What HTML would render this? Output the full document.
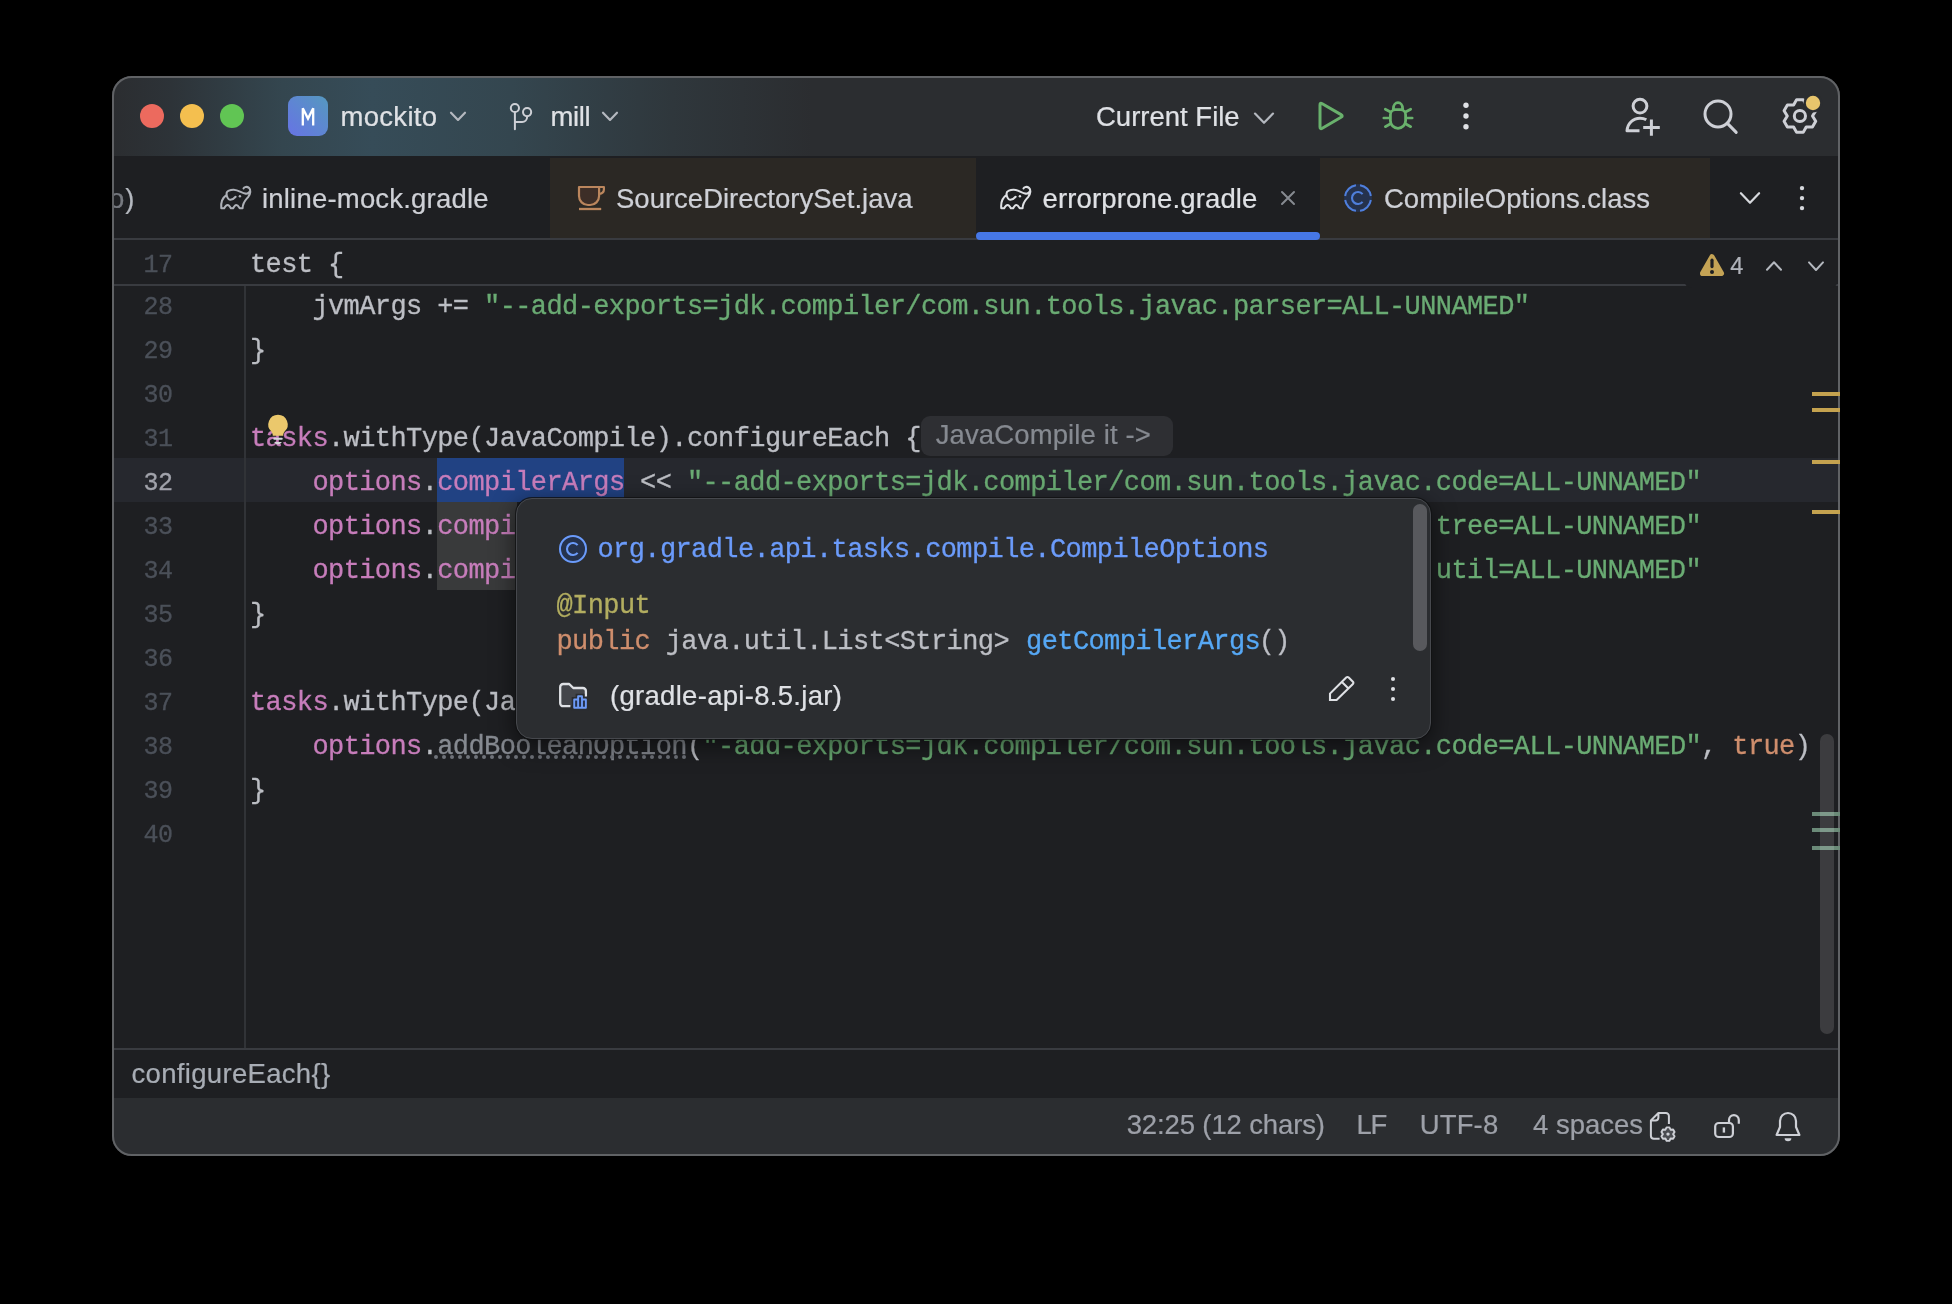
<!DOCTYPE html>
<html lang="en"><head><meta charset="utf-8"><title>errorprone.gradle - mockito</title>
<style>
html,body{margin:0;padding:0;background:#000;}
body{width:1952px;height:1304px;overflow:hidden;position:relative;}
.win{position:absolute;left:112px;top:76px;width:1728px;height:1080px;border-radius:20px;overflow:hidden;background:#1e1f22;}
.pg{position:absolute;left:-112px;top:-76px;width:1952px;height:1304px;will-change:transform;}
.frame{position:absolute;left:112px;top:76px;width:1728px;height:1080px;border-radius:20px;box-sizing:border-box;border:2px solid #606265;pointer-events:none;}
.b{position:absolute;display:block;}
.t{position:absolute;white-space:pre;margin:0;padding:0;}
.s{font-family:"Liberation Sans",sans-serif;-webkit-text-stroke:0.22px;}
.m{font-family:"Liberation Mono",monospace;-webkit-text-stroke:0.3px;}
.m span,.s span{white-space:pre;}
</style></head>
<body>
<div class="win"><div class="pg">
<div class="b" style="left:112px;top:76px;width:1728px;height:80px;background:linear-gradient(90deg,#2b2d30 0px,#2d3338 60px,#34464f 170px,#364c58 260px,#34464f 400px,#2f373c 560px,#2b2d30 700px);"></div>
<div class="b" style="left:112px;top:156px;width:1728px;height:84px;background:#1e1f22;"></div>
<div class="b" style="left:550px;top:158px;width:426px;height:80px;background:#2b2824;"></div>
<div class="b" style="left:1320px;top:158px;width:390px;height:80px;background:#2b2824;"></div>
<div class="b" style="left:112px;top:238px;width:1728px;height:2px;background:#393b40;"></div>
<div class="b" style="left:976px;top:232px;width:344px;height:8px;background:#4677e6;border-radius:4px;"></div>
<div class="b" style="left:112px;top:240px;width:1728px;height:808px;background:#1e1f22;"></div>
<div class="b" style="left:112px;top:458px;width:1726px;height:44px;background:#26282e;"></div>
<div class="b" style="left:244px;top:286px;width:2px;height:762px;background:#313337;"></div>
<div class="b" style="left:112px;top:1048px;width:1728px;height:2px;background:#393b40;"></div>
<div class="b" style="left:112px;top:1050px;width:1728px;height:48px;background:#1e1f22;"></div>
<div class="b" style="left:112px;top:1098px;width:1728px;height:58px;background:#2b2d30;"></div>
<div class="b" style="left:140px;top:104px;width:24px;height:24px;background:#ec6a5e;border-radius:50%;"></div>
<div class="b" style="left:180px;top:104px;width:24px;height:24px;background:#f4bf4f;border-radius:50%;"></div>
<div class="b" style="left:220px;top:104px;width:24px;height:24px;background:#61c554;border-radius:50%;"></div>
<div class="b" style="left:288px;top:96px;width:40px;height:40px;background:linear-gradient(45deg,#6675e3 5%,#5697c1 95%);border-radius:9px;"></div>
<div class="t s" style="left:340.5px;top:101.2px;font-size:27.5px;line-height:31px;color:#dfe1e5;letter-spacing:0.3px;">mockito</div>
<div class="t s" style="left:550.5px;top:101.2px;font-size:27.5px;line-height:31px;color:#dfe1e5;letter-spacing:-0.4px;">mill</div>
<div class="t s" style="left:1096px;top:101.2px;font-size:27.5px;line-height:31px;color:#dfe1e5;">Current File</div>
<div class="t s" style="left:109px;top:183px;font-size:27.5px;line-height:31px;color:#b4b8bf;"><span style="color:#777a80">o</span><span style="margin-left:1px">)</span></div>
<div class="t s" style="left:262px;top:183px;font-size:27.5px;line-height:31px;color:#ced0d6;letter-spacing:0.2px;">inline-mock.gradle</div>
<div class="t s" style="left:616px;top:183px;font-size:27.5px;line-height:31px;color:#ced0d6;">SourceDirectorySet.java</div>
<div class="t s" style="left:1042.5px;top:183px;font-size:27.5px;line-height:31px;color:#dfe1e5;letter-spacing:0.15px;">errorprone.gradle</div>
<div class="t s" style="left:1384px;top:183px;font-size:27.5px;line-height:31px;color:#ced0d6;">CompileOptions.class</div>
<div class="b" style="left:437px;top:458px;width:187px;height:44px;background:#214283;"></div>
<div class="b" style="left:437px;top:502px;width:80px;height:88px;background:#393a3b;"></div>
<div class="t m" style="left:143.6px;top:293px;font-size:25px;line-height:29px;color:#4b5059;letter-spacing:-0.6px;">28</div>
<div class="t m" style="left:143.6px;top:337px;font-size:25px;line-height:29px;color:#4b5059;letter-spacing:-0.6px;">29</div>
<div class="t m" style="left:143.6px;top:381px;font-size:25px;line-height:29px;color:#4b5059;letter-spacing:-0.6px;">30</div>
<div class="t m" style="left:143.6px;top:425px;font-size:25px;line-height:29px;color:#4b5059;letter-spacing:-0.6px;">31</div>
<div class="t m" style="left:143.6px;top:469px;font-size:25px;line-height:29px;color:#a1a3ab;letter-spacing:-0.6px;">32</div>
<div class="t m" style="left:143.6px;top:513px;font-size:25px;line-height:29px;color:#4b5059;letter-spacing:-0.6px;">33</div>
<div class="t m" style="left:143.6px;top:557px;font-size:25px;line-height:29px;color:#4b5059;letter-spacing:-0.6px;">34</div>
<div class="t m" style="left:143.6px;top:601px;font-size:25px;line-height:29px;color:#4b5059;letter-spacing:-0.6px;">35</div>
<div class="t m" style="left:143.6px;top:645px;font-size:25px;line-height:29px;color:#4b5059;letter-spacing:-0.6px;">36</div>
<div class="t m" style="left:143.6px;top:689px;font-size:25px;line-height:29px;color:#4b5059;letter-spacing:-0.6px;">37</div>
<div class="t m" style="left:143.6px;top:733px;font-size:25px;line-height:29px;color:#4b5059;letter-spacing:-0.6px;">38</div>
<div class="t m" style="left:143.6px;top:777px;font-size:25px;line-height:29px;color:#4b5059;letter-spacing:-0.6px;">39</div>
<div class="t m" style="left:143.6px;top:821px;font-size:25px;line-height:29px;color:#4b5059;letter-spacing:-0.6px;">40</div>
<div class="t m" style="left:250px;top:292px;font-size:27px;line-height:30px;color:#bcbec4;letter-spacing:-0.6px;"><span style="color:#bcbec4">    jvmArgs += </span><span style="color:#6aab73">"--add-exports=jdk.compiler/com.sun.tools.javac.parser=ALL-UNNAMED"</span></div>
<div class="t m" style="left:250px;top:336px;font-size:27px;line-height:30px;color:#bcbec4;letter-spacing:-0.6px;"><span style="color:#bcbec4">}</span></div>
<div class="t m" style="left:250px;top:424px;font-size:27px;line-height:30px;color:#bcbec4;letter-spacing:-0.6px;"><span style="color:#c77dbb">tasks</span><span style="color:#bcbec4">.withType(JavaCompile).configureEach {</span></div>
<div class="t m" style="left:250px;top:468px;font-size:27px;line-height:30px;color:#bcbec4;letter-spacing:-0.6px;"><span style="color:#bcbec4">    </span><span style="color:#c77dbb">options</span><span style="color:#bcbec4">.</span><span style="color:#c77dbb">compilerArgs</span><span style="color:#bcbec4"> &lt;&lt; </span><span style="color:#6aab73">"--add-exports=jdk.compiler/com.sun.tools.javac.code=ALL-UNNAMED"</span></div>
<div class="t m" style="left:250px;top:512px;font-size:27px;line-height:30px;color:#bcbec4;letter-spacing:-0.6px;"><span style="color:#bcbec4">    </span><span style="color:#c77dbb">options</span><span style="color:#bcbec4">.</span><span style="color:#c77dbb">compilerArgs</span><span style="color:#bcbec4"> &lt;&lt; </span><span style="color:#6aab73">"--add-exports=jdk.compiler/com.sun.tools.javac.tree=ALL-UNNAMED"</span></div>
<div class="t m" style="left:250px;top:556px;font-size:27px;line-height:30px;color:#bcbec4;letter-spacing:-0.6px;"><span style="color:#bcbec4">    </span><span style="color:#c77dbb">options</span><span style="color:#bcbec4">.</span><span style="color:#c77dbb">compilerArgs</span><span style="color:#bcbec4"> &lt;&lt; </span><span style="color:#6aab73">"--add-exports=jdk.compiler/com.sun.tools.javac.util=ALL-UNNAMED"</span></div>
<div class="t m" style="left:250px;top:600px;font-size:27px;line-height:30px;color:#bcbec4;letter-spacing:-0.6px;"><span style="color:#bcbec4">}</span></div>
<div class="t m" style="left:250px;top:688px;font-size:27px;line-height:30px;color:#bcbec4;letter-spacing:-0.6px;"><span style="color:#c77dbb">tasks</span><span style="color:#bcbec4">.withType(JavaCompile).configureEach {</span></div>
<div class="t m" style="left:250px;top:732px;font-size:27px;line-height:30px;color:#bcbec4;letter-spacing:-0.6px;"><span style="color:#bcbec4">    </span><span style="color:#c77dbb">options</span><span style="color:#bcbec4">.</span><span style="color:#868a91">addBooleanOption</span><span style="color:#bcbec4">(</span><span style="color:#6aab73">"-add-exports=jdk.compiler/com.sun.tools.javac.code=ALL-UNNAMED"</span><span style="color:#bcbec4">, </span><span style="color:#cf8e6d">true</span><span style="color:#bcbec4">)</span></div>
<div class="t m" style="left:250px;top:776px;font-size:27px;line-height:30px;color:#bcbec4;letter-spacing:-0.6px;"><span style="color:#bcbec4">}</span></div>
<svg class="b" style="left:430px;top:752px" width="264" height="10" viewBox="430 752 264 10"><circle cx="436" cy="757" r="2" fill="#6f737a"/><circle cx="444" cy="757" r="2" fill="#6f737a"/><circle cx="452" cy="757" r="2" fill="#6f737a"/><circle cx="460" cy="757" r="2" fill="#6f737a"/><circle cx="468" cy="757" r="2" fill="#6f737a"/><circle cx="476" cy="757" r="2" fill="#6f737a"/><circle cx="484" cy="757" r="2" fill="#6f737a"/><circle cx="492" cy="757" r="2" fill="#6f737a"/><circle cx="500" cy="757" r="2" fill="#6f737a"/><circle cx="508" cy="757" r="2" fill="#6f737a"/><circle cx="516" cy="757" r="2" fill="#6f737a"/><circle cx="524" cy="757" r="2" fill="#6f737a"/><circle cx="532" cy="757" r="2" fill="#6f737a"/><circle cx="540" cy="757" r="2" fill="#6f737a"/><circle cx="548" cy="757" r="2" fill="#6f737a"/><circle cx="556" cy="757" r="2" fill="#6f737a"/><circle cx="564" cy="757" r="2" fill="#6f737a"/><circle cx="572" cy="757" r="2" fill="#6f737a"/><circle cx="580" cy="757" r="2" fill="#6f737a"/><circle cx="588" cy="757" r="2" fill="#6f737a"/><circle cx="596" cy="757" r="2" fill="#6f737a"/><circle cx="604" cy="757" r="2" fill="#6f737a"/><circle cx="612" cy="757" r="2" fill="#6f737a"/><circle cx="620" cy="757" r="2" fill="#6f737a"/><circle cx="628" cy="757" r="2" fill="#6f737a"/><circle cx="636" cy="757" r="2" fill="#6f737a"/><circle cx="644" cy="757" r="2" fill="#6f737a"/><circle cx="652" cy="757" r="2" fill="#6f737a"/><circle cx="660" cy="757" r="2" fill="#6f737a"/><circle cx="668" cy="757" r="2" fill="#6f737a"/><circle cx="676" cy="757" r="2" fill="#6f737a"/><circle cx="684" cy="757" r="2" fill="#6f737a"/></svg>
<div class="b" style="left:921px;top:416px;width:252px;height:40px;background:#2e2f33;border-radius:9px;"></div>
<div class="t s" style="left:935.7px;top:419px;font-size:27.5px;line-height:31px;color:#868a91;letter-spacing:0.12px;">JavaCompile it -&gt;</div>
<div class="b" style="left:112px;top:240px;width:1728px;height:44px;background:#1e1f22;"></div>
<div class="b" style="left:112px;top:284px;width:1728px;height:2px;background:#393b40;"></div>
<div class="t m" style="left:143.6px;top:251px;font-size:25px;line-height:29px;color:#4b5059;letter-spacing:-0.6px;">17</div>
<div class="t m" style="left:250px;top:250px;font-size:27px;line-height:30px;color:#bcbec4;letter-spacing:-0.6px;"><span style="color:#bcbec4">test {</span></div>
<div class="b" style="left:1684px;top:240px;width:154px;height:48px;background:#1e1f22;border-radius:0 0 8px 8px;"></div>
<div class="t s" style="left:1730.2px;top:253px;font-size:23.6px;line-height:26px;color:#b0b3ba;">4</div>
<div class="b" style="left:1812px;top:392px;width:28px;height:4px;background:#c4a24f;"></div>
<div class="b" style="left:1812px;top:408px;width:28px;height:4px;background:#c4a24f;"></div>
<div class="b" style="left:1812px;top:460px;width:28px;height:4px;background:#c4a24f;"></div>
<div class="b" style="left:1812px;top:510px;width:28px;height:4px;background:#c4a24f;"></div>
<div class="b" style="left:1812px;top:812px;width:28px;height:4px;background:#6b8a78;"></div>
<div class="b" style="left:1812px;top:828px;width:28px;height:4px;background:#6b8a78;"></div>
<div class="b" style="left:1812px;top:846px;width:28px;height:4px;background:#6b8a78;"></div>
<div class="b" style="left:1820px;top:734px;width:14px;height:300px;background:rgba(255,255,255,0.135);border-radius:7px;"></div>
<div class="b" style="left:516px;top:498px;width:915px;height:241px;background:#2b2d30;border-radius:16px;border:1.5px solid #46484d;box-sizing:border-box;box-shadow:0 0 0 1px rgba(16,17,19,.8), 0 6px 22px 2px rgba(0,0,0,.5);"></div>
<div class="t m" style="left:597.5px;top:534.5px;font-size:27px;line-height:30px;color:#6b9bfa;letter-spacing:-0.6px;">org.gradle.api.tasks.compile.CompileOptions</div>
<div class="t m" style="left:556.5px;top:591px;font-size:27px;line-height:30px;color:#bcbec4;letter-spacing:-0.6px;"><span style="color:#b3ae60">@Input</span></div>
<div class="t m" style="left:556.5px;top:627px;font-size:27px;line-height:30px;color:#bcbec4;letter-spacing:-0.6px;"><span style="color:#cf8e6d">public</span><span style="color:#bcbec4"> java.util.List&lt;String&gt; </span><span style="color:#56a8f5;margin-left:1.5px">getCompilerArgs</span><span style="color:#bcbec4;margin-left:-1.5px">()</span></div>
<div class="t s" style="left:610px;top:680px;font-size:27.5px;line-height:31px;color:#dfe1e5;letter-spacing:0.3px;">(gradle-api-8.5.jar)</div>
<div class="b" style="left:1413px;top:504px;width:14px;height:147px;background:#58595d;border-radius:7px;"></div>
<div class="t s" style="left:131.5px;top:1058px;font-size:27.5px;line-height:31px;color:#a8adb5;letter-spacing:0.32px;">configureEach{}</div>
<div class="t s" style="left:1126.7px;top:1109px;font-size:27.5px;line-height:31px;color:#9da0a8;letter-spacing:-0.13px;">32:25 (12 chars)</div>
<div class="t s" style="left:1356.5px;top:1109px;font-size:27.5px;line-height:31px;color:#9da0a8;letter-spacing:-1.2px;">LF</div>
<div class="t s" style="left:1419.7px;top:1109px;font-size:27.5px;line-height:31px;color:#9da0a8;letter-spacing:0.15px;">UTF-8</div>
<div class="t s" style="left:1533px;top:1109px;font-size:27.5px;line-height:31px;color:#9da0a8;">4 spaces</div>
<svg class="b" style="left:0;top:0" width="1952" height="1304" viewBox="0 0 1952 1304" fill="none"><path d="M302.8 125.6 V108.2 L308 118.6 L313.2 108.2 V125.6" stroke="#ffffff" stroke-width="2.3" fill="none" stroke-linecap="butt" stroke-linejoin="miter"/><path d="M451 112.7 L458 119.89999999999999 L465 112.7" stroke="#b4b8bf" stroke-width="2.2" fill="none" stroke-linecap="round" stroke-linejoin="round" /><path d="M603 112.7 L610 119.89999999999999 L617 112.7" stroke="#b4b8bf" stroke-width="2.2" fill="none" stroke-linecap="round" stroke-linejoin="round" /><path d="M1255 113.60000000000001 L1264 122.8 L1273 113.60000000000001" stroke="#b4b8bf" stroke-width="2.2" fill="none" stroke-linecap="round" stroke-linejoin="round" /><circle cx="514.9" cy="108" r="4.1" stroke="#ced0d6" stroke-width="2"/><circle cx="527.1" cy="112.1" r="4.1" stroke="#ced0d6" stroke-width="2"/><path d="M514.9 112.5 V129.3 M527.1 116.6 V117 A5 5 0 0 1 522.1 122 H515.4" stroke="#ced0d6" stroke-width="2" fill="none" stroke-linecap="round" stroke-linejoin="round" /><path d="M1320 126.9 L1320 105 Q1320 102.4 1322.25 103.71 L1341.05 114.64 Q1343.3 115.95 1341.05 117.26 L1322.25 128.19 Q1320 129.5 1320 126.9 Z" stroke="#69b16c" stroke-width="3" fill="none" stroke-linecap="round" stroke-linejoin="round" /><path d="M1390.4 114.7 A5 5 0 0 1 1395.4 109.7 H1400.6 A5 5 0 0 1 1405.6 114.7 V120.7 A7.6 7.6 0 0 1 1390.4 120.7 Z M1393.4 109.7 V108.4 A4.6 5.8 0 0 1 1402.6 108.4 V109.7" stroke="#69b16c" stroke-width="2.8" fill="none" stroke-linecap="round" stroke-linejoin="round" /><path d="M1390.1 111.8 L1385.3 109.2 M1389.4 118 H1383.8 M1390.1 124 L1385.3 126.7 M1405.9 111.8 L1410.7 109.2 M1406.6 118 H1412.2 M1405.9 124 L1410.7 126.7" stroke="#69b16c" stroke-width="2.7" fill="none" stroke-linecap="round" stroke-linejoin="round" /><circle cx="1466" cy="105.3" r="2.7" fill="#dfe1e5"/><circle cx="1466" cy="116" r="2.7" fill="#dfe1e5"/><circle cx="1466" cy="126.8" r="2.7" fill="#dfe1e5"/><circle cx="1640" cy="106.1" r="6.9" stroke="#ced0d6" stroke-width="3"/><path d="M1639.5 130.8 H1627 C1627.5 123.5 1633 118.2 1640 118.2 C1642.3 118.2 1644.5 118.7 1646.3 119.8 M1651.4 119.5 V135.8 M1643.2 127.6 H1659.8" stroke="#ced0d6" stroke-width="3" fill="none" stroke-linejoin="round" stroke-linecap="butt"/><circle cx="1718" cy="113.9" r="13" stroke="#ced0d6" stroke-width="3"/><path d="M1727.4 123.4 L1736.2 132.4" stroke="#ced0d6" stroke-width="3" fill="none" stroke-linecap="round" stroke-linejoin="round" /><path d="M1803.20 99.63 L1796.60 99.63 L1793.60 105.09 L1787.37 104.96 L1784.07 110.67 L1787.30 116.00 L1784.07 121.33 L1787.37 127.04 L1793.60 126.91 L1796.60 132.37 L1803.20 132.37 L1806.20 126.91 L1812.43 127.04 L1815.73 121.33 L1812.50 116.00 L1815.73 110.67 L1812.43 104.96 L1806.20 105.09 Z" stroke="#ced0d6" stroke-width="3" fill="none" stroke-linecap="round" stroke-linejoin="round" /><circle cx="1799.9" cy="116" r="5.6" stroke="#ced0d6" stroke-width="3"/><circle cx="1813" cy="103" r="9.6" fill="#2b2d30"/><circle cx="1813" cy="103" r="7.2" fill="#e8c56c"/><g transform="translate(210 175) scale(0.04098)"><path d="M818 328 C832 290 900 272 950 314 C1000 360 995 460 930 540 C870 610 800 660 795 810 M405 450 C400 390 500 355 580 358 C700 362 780 450 870 455 C920 458 960 440 975 395 M405 450 C400 520 440 600 490 605 C540 610 590 570 625 530 M400 492 C300 560 262 680 275 810 L345 810 C370 760 400 730 430 730 C470 730 490 770 510 810 L565 810 C590 760 610 730 640 730 C680 730 700 770 725 810 L795 810" stroke="#aeb1b8" stroke-width="50" fill="none" stroke-linecap="round" stroke-linejoin="round" /><circle cx="730" cy="520" r="30" fill="#aeb1b8"/></g><g transform="translate(990 175) scale(0.04098)"><path d="M818 328 C832 290 900 272 950 314 C1000 360 995 460 930 540 C870 610 800 660 795 810 M405 450 C400 390 500 355 580 358 C700 362 780 450 870 455 C920 458 960 440 975 395 M405 450 C400 520 440 600 490 605 C540 610 590 570 625 530 M400 492 C300 560 262 680 275 810 L345 810 C370 760 400 730 430 730 C470 730 490 770 510 810 L565 810 C590 760 610 730 640 730 C680 730 700 770 725 810 L795 810" stroke="#dfe1e5" stroke-width="50" fill="none" stroke-linecap="round" stroke-linejoin="round" /><circle cx="730" cy="520" r="30" fill="#dfe1e5"/></g><path d="M579 187 H599.1 V196 A9 9 0 0 1 590.1 205 H588 A9 9 0 0 1 579 196 Z" stroke="#bb865d" stroke-width="2.2" fill="#3d2e27" stroke-linecap="round" stroke-linejoin="round" /><path d="M599.1 187 H603.9 V189.5 C603.9 192 601.5 193.6 599.1 194" stroke="#bb865d" stroke-width="2.2" fill="none" stroke-linecap="round" stroke-linejoin="round" /><path d="M579 209 H601.2" stroke="#bb865d" stroke-width="2.3" fill="none" stroke-linejoin="round" stroke-linecap="butt"/><path d="M1282 192 L1294 204 M1294 192 L1282 204" stroke="#868a91" stroke-width="2" fill="none" stroke-linecap="round" stroke-linejoin="round" /><circle cx="1358" cy="198" r="14" fill="#25324d"/><path d="M1370.84 200.03 A13 13 0 0 1 1360.03 210.84" stroke="#4f7fdc" stroke-width="2"/><path d="M1355.97 210.84 A13 13 0 0 1 1345.16 200.03" stroke="#4f7fdc" stroke-width="2"/><path d="M1345.16 195.97 A13 13 0 0 1 1355.97 185.16" stroke="#4f7fdc" stroke-width="2"/><path d="M1360.03 185.16 A13 13 0 0 1 1370.84 195.97" stroke="#4f7fdc" stroke-width="2"/><path d="M1362.60 194.14 A6 6 0 1 0 1362.60 201.86" stroke="#4f7fdc" stroke-width="2.1"/><circle cx="573" cy="549" r="14" fill="#25324d"/><circle cx="573" cy="549" r="13" stroke="#6b9bfa" stroke-width="2"/><path d="M577.60 545.14 A6 6 0 1 0 577.60 552.86" stroke="#6b9bfa" stroke-width="2.1"/><path d="M1740.9 193.2 L1750 202.8 L1759.1 193.2" stroke="#d6d8dd" stroke-width="2.2" fill="none" stroke-linecap="round" stroke-linejoin="round" /><circle cx="1802" cy="188.1" r="2.2" fill="#d6d8dd"/><circle cx="1802" cy="198.1" r="2.2" fill="#d6d8dd"/><circle cx="1802" cy="208.1" r="2.2" fill="#d6d8dd"/><path d="M1712 256.8 L1721.4 273.4 H1702.6 Z" stroke="#c4a355" stroke-width="5.2" fill="#c4a355" stroke-linecap="round" stroke-linejoin="round" /><path d="M1712 260.2 V266.6" stroke="#1e1f22" stroke-width="3.2" fill="none" stroke-linecap="round" stroke-linejoin="round" /><circle cx="1712" cy="271.9" r="2" fill="#1e1f22"/><path d="M1767 269.8 L1774 262.2 L1781 269.8" stroke="#b4b8bf" stroke-width="2" fill="none" stroke-linecap="round" stroke-linejoin="round" /><path d="M1809 262.4 L1816 270 L1823 262.4" stroke="#b4b8bf" stroke-width="2" fill="none" stroke-linecap="round" stroke-linejoin="round" /><path d="M278 414.8 A9.7 9.7 0 0 1 284.6 431.6 C283.6 432.8 283.2 434 283.2 435.8 H272.8 C272.8 434 272.4 432.8 271.4 431.6 A9.7 9.7 0 0 1 278 414.8 Z" fill="#ebc86c"/><path d="M274.2 438.8 H281.8" stroke="#d5d7db" stroke-width="1.9" fill="none" stroke-linecap="round" stroke-linejoin="round" /><path d="M274.2 441.9 H281.8 C281 443.6 279.6 444.2 278 444.2 C276.4 444.2 275 443.6 274.2 441.9 Z" fill="#d5d7db"/><path d="M570.4 706.2 H563.2 A3 3 0 0 1 560.2 703.2 V687 A3 3 0 0 1 563.2 684 H569.2 L573.3 688 H582.9 A3 3 0 0 1 585.9 691 V696.4" stroke="#dfe1e5" stroke-width="2.3" fill="#43454a" stroke-linejoin="round" stroke-linecap="butt"/><path d="M574.2 707.7 V699.5 H578.1 V696.2 H582 V699.5 H585.9 V707.7 Z" fill="#25324d" stroke="#2b2d30" stroke-width="5"/><path d="M574.2 707.7 V699.5 H578.1 V696.2 H582 V699.5 H585.9 V707.7 Z M578.1 699.5 V707.7 M582 699.5 V707.7" stroke="#6e9bf7" stroke-width="1.9" fill="#25324d" stroke-linecap="round" stroke-linejoin="round" /><path d="M1330 700 V693.6 L1346.2 677.6 A1.8 1.8 0 0 1 1348.7 677.6 L1352.9 681.7 A1.6 1.6 0 0 1 1352.9 684 L1336.6 700 Z M1341.9 681.9 L1348 687.9" stroke="#dfe1e5" stroke-width="2.1" fill="none" stroke-linecap="round" stroke-linejoin="miter"/><circle cx="1393" cy="679" r="2.05" fill="#dfe1e5"/><circle cx="1393" cy="689" r="2.05" fill="#dfe1e5"/><circle cx="1393" cy="699" r="2.05" fill="#dfe1e5"/><path d="M1668.9 1124 V1116 A3 3 0 0 0 1665.9 1113 H1658.4 L1650.9 1120.4 V1135.7 A3 3 0 0 0 1653.9 1138.7 H1659.6 M1658.4 1113.4 V1117.5 A3 3 0 0 1 1655.4 1120.4 H1651.2" stroke="#ced0d6" stroke-width="2" fill="none" stroke-linejoin="round" stroke-linecap="butt"/><path d="M1669.43 1127.35 L1666.57 1127.35 L1665.45 1129.68 L1662.87 1129.48 L1661.44 1131.97 L1662.90 1134.10 L1661.44 1136.23 L1662.87 1138.72 L1665.45 1138.52 L1666.57 1140.85 L1669.43 1140.85 L1670.55 1138.52 L1673.13 1138.72 L1674.56 1136.23 L1673.10 1134.10 L1674.56 1131.97 L1673.13 1129.48 L1670.55 1129.68 Z" stroke="#ced0d6" stroke-width="1.9" fill="#4a4c51" stroke-linecap="round" stroke-linejoin="round" /><circle cx="1668" cy="1134.1" r="1.7" fill="#ced0d6"/><rect x="1715.2" y="1123" width="17.7" height="14" rx="3.6" stroke="#ced0d6" stroke-width="2.2"/><path d="M1723.9 1127.4 V1132.6" stroke="#ced0d6" stroke-width="2.4" fill="none" stroke-linejoin="round" stroke-linecap="butt"/><path d="M1729 1122.6 V1120 A4.9 4.9 0 0 1 1738.8 1120 V1123.8" stroke="#ced0d6" stroke-width="2.2" fill="none" stroke-linejoin="round" stroke-linecap="butt"/><path d="M1776.6 1135 L1780 1127 V1121 A8 8 0 0 1 1796 1121 V1127 L1799.4 1135 Z" stroke="#ced0d6" stroke-width="2.2" fill="none" stroke-linecap="round" stroke-linejoin="round" /><path d="M1784.6 1138.3 H1791.4 A3.4 3 0 0 1 1784.6 1138.3 Z" fill="#ced0d6"/></svg>
</div></div>
<div class="frame"></div>
<div class="b" style="left:1838px;top:392px;width:2px;height:4px;background:#c4a24f"></div><div class="b" style="left:1838px;top:408px;width:2px;height:4px;background:#c4a24f"></div><div class="b" style="left:1838px;top:460px;width:2px;height:4px;background:#c4a24f"></div><div class="b" style="left:1838px;top:510px;width:2px;height:4px;background:#c4a24f"></div><div class="b" style="left:1838px;top:812px;width:2px;height:4px;background:#6b8a78"></div><div class="b" style="left:1838px;top:828px;width:2px;height:4px;background:#6b8a78"></div><div class="b" style="left:1838px;top:846px;width:2px;height:4px;background:#6b8a78"></div>
</body></html>
